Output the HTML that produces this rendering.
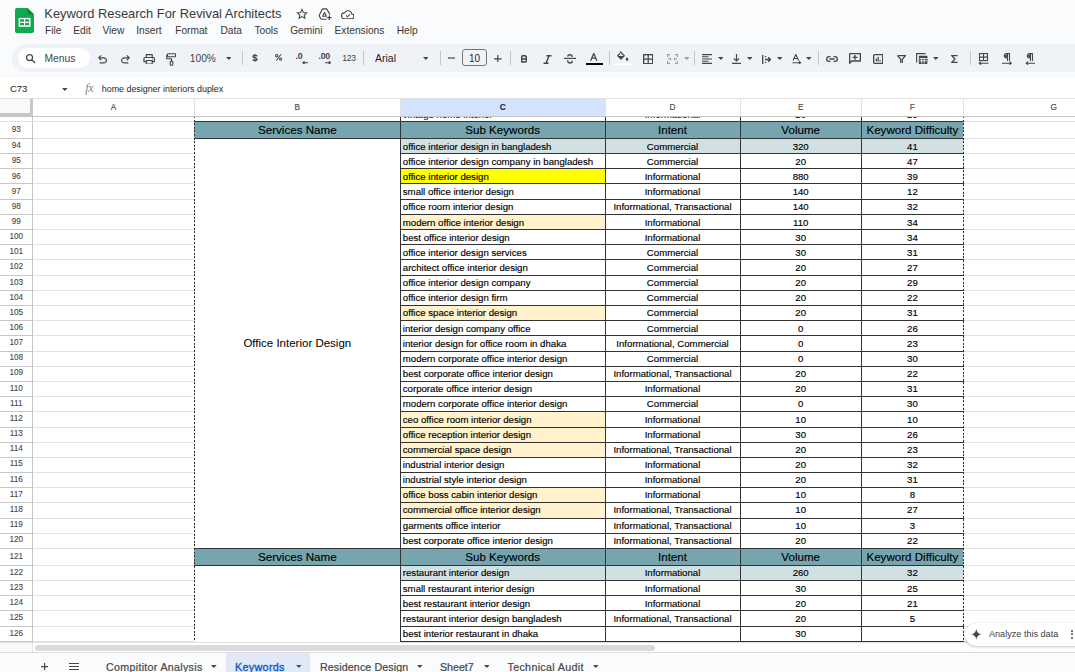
<!DOCTYPE html>
<html><head><meta charset="utf-8"><style>
html,body{margin:0;padding:0;width:1075px;height:672px;overflow:hidden;background:#f9fbfd;font-family:"Liberation Sans",sans-serif;}
.a{position:absolute;}
.t{color:#000;-webkit-text-stroke:0.15px #000;}
.menu{top:24px;font-size:10.2px;line-height:13px;color:#383838;white-space:nowrap}
.tb{top:52px;line-height:13px;color:#444746;white-space:nowrap}
.dd{top:57.5px;width:0;height:0;border-left:2.8px solid transparent;border-right:2.8px solid transparent;border-top:2.8px solid #444746}
.sep{top:51.2px;width:1px;height:14px;background:#c7c7c7}
.tab{top:659.8px;line-height:14px;color:#444746;white-space:nowrap;-webkit-text-stroke:0.2px #444746}
</style></head><body>
<!-- title bar -->
<svg class="a" style="left:15px;top:8px" width="19" height="25" viewBox="0 0 19 25">
  <path d="M2 0H12.5L19 6.4V23a2 2 0 0 1-2 2H2a2 2 0 0 1-2-2V2a2 2 0 0 1 2-2z" fill="#11a850"/>
  <path d="M12.5 0L19 6.4H14.5a2 2 0 0 1-2-2z" fill="#0a8a3a"/>
  <rect x="3.6" y="9.9" width="11.9" height="8.9" fill="#fff"/>
  <rect x="5" y="11.3" width="4" height="2.4" fill="#11a850"/>
  <rect x="10.1" y="11.3" width="4" height="2.4" fill="#11a850"/>
  <rect x="5" y="14.9" width="4" height="2.4" fill="#11a850"/>
  <rect x="10.1" y="14.9" width="4" height="2.4" fill="#11a850"/>
</svg>
<div class="a" style="left:44.3px;top:4.9px;font-size:12.9px;line-height:17px;color:#3a3a3a;white-space:nowrap">Keyword Research For Revival Architects</div>
<!-- star -->
<svg class="a" style="left:295.8px;top:7.6px" width="12" height="12" viewBox="0 0 24 24"><path d="M12 2.8l2.75 6.1 6.65.7-4.97 4.47 1.4 6.53L12 17.25 6.17 20.6l1.4-6.53L2.6 9.6l6.65-.7z" fill="none" stroke="#444746" stroke-width="2.1" stroke-linejoin="miter"/></svg>
<!-- drive add -->
<svg class="a" style="left:318px;top:8px" width="15" height="13" viewBox="0 0 15 13">
 <path d="M11.8 6.6L9.2 1.6Q8.8 0.9 8 0.9H5.3Q4.5 0.9 4.1 1.6L1.4 6.9Q1.1 7.5 1.4 8.1L2.6 10.4Q3 11.2 3.8 11.2H8.6" fill="none" stroke="#444746" stroke-width="1.15" stroke-linejoin="round"/>
 <path d="M6.5 4.6L4.7 8.2H8.4z" fill="none" stroke="#444746" stroke-width="1.15" stroke-linejoin="round"/>
 <path d="M11.3 7.5V11.9M9.1 9.7H13.5" stroke="#444746" stroke-width="1.25"/>
</svg>
<!-- cloud -->
<svg class="a" style="left:340.9px;top:9.6px" width="13.4" height="9.4" viewBox="0 0 28 19.6">
 <path d="M7 18.3h15a5 5 0 0 0 .6-9.97A8 8 0 0 0 7.5 6 6.1 6.1 0 0 0 7 18.3z" fill="none" stroke="#444746" stroke-width="2.3"/>
 <path d="M10.5 11.3l3 3 5.5-5.5" fill="none" stroke="#444746" stroke-width="2.2"/>
</svg>
<!-- menu -->
<div class="a menu" style="left:45px">File</div>
<div class="a menu" style="left:73.2px">Edit</div>
<div class="a menu" style="left:102.4px">View</div>
<div class="a menu" style="left:136.2px">Insert</div>
<div class="a menu" style="left:175.2px">Format</div>
<div class="a menu" style="left:220.4px">Data</div>
<div class="a menu" style="left:254.4px">Tools</div>
<div class="a menu" style="left:290.2px">Gemini</div>
<div class="a menu" style="left:334.5px">Extensions</div>
<div class="a menu" style="left:396.7px">Help</div>

<!-- toolbar band -->
<div class="a" style="left:12px;top:43.7px;width:1100px;height:28.8px;border-radius:14.4px;background:#eff2f7"></div>
<div class="a" style="left:18px;top:48px;width:72px;height:20px;border-radius:10px;background:#fff"></div>
<svg class="a" style="left:25px;top:52.5px" width="11.5" height="11.5" viewBox="0 0 24 24"><circle cx="9.5" cy="9.5" r="6.3" fill="none" stroke="#444746" stroke-width="2.5"/><path d="M14.2 14.2L21 21" stroke="#444746" stroke-width="2.8"/></svg>
<div class="a tb" style="left:44.4px;font-size:10.3px;color:#444746">Menus</div>
<!-- undo/redo -->
<svg class="a" style="left:98.3px;top:55.3px" width="9" height="8.5" viewBox="4 4 16 15"><path d="M7 19v-2h7.1q1.575 0 2.738-1T18 13.5q0-1.5-1.162-2.5T14.1 10H7.8l2.6 2.6L9 14 4 9l5-5 1.4 1.4L7.8 8h6.3q2.425 0 4.163 1.575T20 13.5q0 2.35-1.737 3.925T14.1 19Z" fill="#444746"/></svg>
<svg class="a" style="left:120.9px;top:55.3px" width="9" height="8.5" viewBox="4 4 16 15"><path d="M9.9 19q-2.425 0-4.163-1.575T4 13.5q0-2.35 1.737-3.925T9.9 8h6.3l-2.6-2.6L15 4l5 5-5 5-1.4-1.4 2.6-2.6H9.9q-1.575 0-2.738 1T6 13.5q0 1.5 1.162 2.5T9.9 17H17v2Z" fill="#444746"/></svg>
<!-- print -->
<svg class="a" style="left:142.5px;top:53.5px" width="12.5" height="10.6" viewBox="2 3 20 18"><path d="M16 8V5H8v3H6V3h12v5ZM18 12.5q.425 0 .713-.288Q19 11.925 19 11.5t-.287-.713Q18.425 10.5 18 10.5t-.712.287Q17 11.075 17 11.5t.288.712q.287.288.712.288ZM16 19v-4H8v4Zm2 2H6v-4H2v-6q0-1.275.875-2.137Q3.75 8 5 8h14q1.275 0 2.138.863Q22 9.725 22 11v6h-4Zm2-6v-4q0-.425-.288-.713Q19.425 10 19 10H5q-.425 0-.713.287Q4 10.575 4 11v4h2v-2h12v2Z" fill="#444746"/></svg>
<!-- paint format -->
<svg class="a" style="left:165.5px;top:53px" width="11" height="13" viewBox="0 0 22 26"><rect x="3" y="1.5" width="16" height="6" rx="1" fill="none" stroke="#444746" stroke-width="2.2"/><path d="M3 4.5H1.5v7H11v5" fill="none" stroke="#444746" stroke-width="2.2"/><rect x="8.5" y="16.5" width="5" height="8" rx="1" fill="none" stroke="#444746" stroke-width="2.2"/></svg>
<div class="a tb" style="left:189.8px;font-size:10.2px">100%</div>
<svg class="a" style="left:225.5px;top:57.3px" width="5.6" height="3" viewBox="0 0 6 3.2"><path d="M0 0H6L3 3.2z" fill="#444746"/></svg>
<div class="a sep" style="left:241.8px"></div>
<svg class="a" style="left:252.4px;top:54px" width="6" height="7.6" viewBox="0 0 6 7.6"><path d="M5.1 2.3Q4.9 1.1 3 1.1 1 1.1 1 2.5 1 3.5 3 3.8 5.1 4.1 5.1 5.3 5.1 6.5 3 6.5 1.1 6.5 0.9 5.3" fill="none" stroke="#444746" stroke-width="1.35"/><path d="M3 0V7.6" stroke="#444746" stroke-width="1"/></svg>
<svg class="a" style="left:274.8px;top:54.4px" width="7.4" height="6.8" viewBox="0 0 7.4 6.8"><circle cx="1.7" cy="1.7" r="1.15" fill="none" stroke="#444746" stroke-width="1.05"/><circle cx="5.7" cy="5.1" r="1.15" fill="none" stroke="#444746" stroke-width="1.05"/><path d="M6 0.3L1.4 6.5" stroke="#444746" stroke-width="1.05"/></svg>
<div class="a tb" style="left:295.6px;font-size:8.8px;font-weight:bold;letter-spacing:-0.4px;top:50.3px">.0</div>
<svg class="a" style="left:301.6px;top:60.7px" width="6.4" height="3.6" viewBox="0 0 6.4 3.6"><path d="M6.4 1.8H1M2.6 0.3L0.9 1.8 2.6 3.3" fill="none" stroke="#444746" stroke-width="1.15"/></svg>
<div class="a tb" style="left:318.6px;font-size:8.8px;font-weight:bold;letter-spacing:-0.4px;top:50.3px">.00</div>
<svg class="a" style="left:324.6px;top:60.5px" width="6.4" height="3.6" viewBox="0 0 6.4 3.6"><path d="M0 1.8H5.4M3.8 0.3L5.5 1.8 3.8 3.3" fill="none" stroke="#444746" stroke-width="1.15"/></svg>
<div class="a tb" style="left:342.2px;font-size:8.6px;letter-spacing:-0.2px">123</div>
<div class="a sep" style="left:363.4px"></div>
<div class="a tb" style="left:375px;font-size:10.5px;color:#1f1f1f">Arial</div>
<svg class="a" style="left:422.5px;top:57.3px" width="5.6" height="3" viewBox="0 0 6 3.2"><path d="M0 0H6L3 3.2z" fill="#444746"/></svg>
<div class="a sep" style="left:440.2px"></div>
<svg class="a" style="left:448px;top:57px" width="7.4" height="2" viewBox="0 0 7.4 2"><path d="M0 1H7.4" stroke="#444746" stroke-width="1.2"/></svg>
<div class="a" style="left:462.2px;top:49.3px;width:22.7px;height:15.2px;border:1px solid #747775;border-radius:3px"></div>
<div class="a tb" style="left:462.2px;width:24.7px;text-align:center;font-size:10px;color:#1f1f1f">10</div>
<svg class="a" style="left:494px;top:54.5px" width="7.6" height="7.6" viewBox="0 0 7.6 7.6"><path d="M0 3.8H7.6M3.8 0V7.6" stroke="#444746" stroke-width="1.2"/></svg>
<div class="a sep" style="left:509.5px"></div>
<svg class="a" style="left:520.8px;top:55px" width="6.4" height="7.8" viewBox="0 0 6.4 7.8"><path d="M0.8 0.75H3.4Q5.4 0.75 5.4 2.4 5.4 3.9 3.4 3.9H0.8M0.8 3.9H3.7Q5.7 3.9 5.7 5.5 5.7 7.05 3.7 7.05H0.8V0.75" fill="none" stroke="#444746" stroke-width="1.5"/></svg>
<svg class="a" style="left:542.5px;top:54.5px" width="9" height="9" viewBox="0 0 9 9"><path d="M3.5 0.8H8.5M0.5 8.2H5.5M6 0.8L3 8.2" fill="none" stroke="#444746" stroke-width="1.4"/></svg>
<svg class="a" style="left:564px;top:54px" width="12" height="10" viewBox="0 0 12 10"><path d="M0 4.4H12" stroke="#444746" stroke-width="1.2"/><path d="M8.3 2.8Q8 0.8 6 0.8 3.8 0.8 3.8 2.6M3.5 6.2Q3.8 9 6 9 8.3 9 8.3 6.8" fill="none" stroke="#444746" stroke-width="1.4"/></svg>
<svg class="a" style="left:590.2px;top:53px" width="7.5" height="8" viewBox="0 0 7.5 8"><path d="M0.6 7.8L3.75 0.4 6.9 7.8M1.8 5.2H5.7" fill="none" stroke="#444746" stroke-width="1.25"/></svg>
<div class="a" style="left:586px;top:62.6px;width:16.5px;height:2.8px;background:#000"></div>
<div class="a sep" style="left:608.5px"></div>
<svg class="a" style="left:617px;top:50.5px" width="12" height="10" viewBox="0 0 24 20"><path d="M6 1l8.5 8.5-6.5 6.5-6.5-6.5 4.5-4.5" fill="none" stroke="#444746" stroke-width="2.4" stroke-linejoin="round"/><path d="M2.5 10h11.5l-6 6z" fill="#444746"/><path d="M20 12q-2.5 3.5-2.5 5a2.5 2.5 0 0 0 5 0q0-1.5-2.5-5z" fill="#444746"/></svg>
<div class="a" style="left:615px;top:62.6px;width:17px;height:2.7px;background:#fff"></div>
<svg class="a" style="left:642.8px;top:53.8px" width="10.4" height="10.4" viewBox="0 0 10 10"><rect x="0.65" y="0.65" width="8.7" height="8.7" fill="none" stroke="#444746" stroke-width="1.3"/><path d="M5 0.5V9.5M0.5 5H9.5" stroke="#444746" stroke-width="1.2"/></svg>
<svg class="a" style="left:666.5px;top:54px" width="11" height="10" viewBox="0 0 11 10"><path d="M0.6 3V0.6H3M8 0.6H10.4V3M0.6 7V9.4H3M8 9.4H10.4V7" fill="none" stroke="#9aa0a6" stroke-width="1.1"/><path d="M1 5H4M2.8 3.8L4.2 5 2.8 6.2M10 5H7M8.2 3.8L6.8 5 8.2 6.2" fill="none" stroke="#9aa0a6" stroke-width="1"/></svg>
<svg class="a" style="left:684px;top:57.3px" width="5.6" height="3" viewBox="0 0 6 3.2"><path d="M0 0H6L3 3.2z" fill="#9aa0a6"/></svg>
<div class="a sep" style="left:694.2px"></div>
<svg class="a" style="left:702px;top:53.9px" width="10.2" height="10" viewBox="0 0 10.2 10"><path d="M0 0.6H10.2M0 2.8H6.5M0 5H10.2M0 7.2H6.5M0 9.4H10.2" stroke="#444746" stroke-width="1.1"/></svg>
<svg class="a" style="left:717.5px;top:57.3px" width="5.6" height="3" viewBox="0 0 6 3.2"><path d="M0 0H6L3 3.2z" fill="#444746"/></svg>
<svg class="a" style="left:732px;top:54px" width="9" height="10" viewBox="0 0 9 10"><path d="M0 9.4H9M4.5 0V7M1.8 4.3L4.5 7 7.2 4.3" fill="none" stroke="#444746" stroke-width="1.2"/></svg>
<svg class="a" style="left:746.8px;top:57.3px" width="5.6" height="3" viewBox="0 0 6 3.2"><path d="M0 0H6L3 3.2z" fill="#444746"/></svg>
<svg class="a" style="left:761.5px;top:54.5px" width="9" height="9" viewBox="0 0 9 9"><path d="M0.7 0V9M3 4.5H8.5M6.2 2.2L8.5 4.5 6.2 6.8M3.5 1V2.3M3.5 6.7V8" fill="none" stroke="#444746" stroke-width="1.3"/></svg>
<svg class="a" style="left:776.5px;top:57.3px" width="5.6" height="3" viewBox="0 0 6 3.2"><path d="M0 0H6L3 3.2z" fill="#444746"/></svg>
<svg class="a" style="left:791.5px;top:54px" width="10" height="10" viewBox="0 0 10 10"><path d="M1 6.5L3.8 0.5 6.6 6.5M2 4.5H5.6M0.5 8.7H8.5M7 7.2L8.6 8.7 7 10" fill="none" stroke="#444746" stroke-width="1.1"/></svg>
<svg class="a" style="left:806px;top:57.3px" width="5.6" height="3" viewBox="0 0 6 3.2"><path d="M0 0H6L3 3.2z" fill="#444746"/></svg>
<div class="a sep" style="left:817.5px"></div>
<svg class="a" style="left:826px;top:56px" width="12" height="6" viewBox="0 0 12 6"><path d="M4.5 0.7H3a2.3 2.3 0 0 0 0 4.6h1.5M7.5 0.7H9a2.3 2.3 0 0 1 0 4.6H7.5M3.5 3H8.5" fill="none" stroke="#444746" stroke-width="1.3"/></svg>
<svg class="a" style="left:849px;top:53.2px" width="12" height="11" viewBox="0 0 12 11"><path d="M0.65 10.3V0.65H11.35V8H2.6z" fill="none" stroke="#444746" stroke-width="1.3" stroke-linejoin="round"/><path d="M6 1.9V6.7M3.6 4.3H8.4" stroke="#444746" stroke-width="1.35"/></svg>
<svg class="a" style="left:873px;top:54px" width="10.4" height="10" viewBox="0 0 10.4 10"><rect x="0.65" y="0.65" width="9.1" height="8.7" rx="0.8" fill="none" stroke="#444746" stroke-width="1.3"/><path d="M3.3 4.5V7.6M5.2 2.8V7.6M7.1 6V7.6" stroke="#444746" stroke-width="1.25"/></svg>
<svg class="a" style="left:897px;top:55px" width="9" height="8.4" viewBox="0 0 9 8.4"><path d="M0.5 0.6H8.5L5.3 4.3V8.4M3.7 8.4V4.3L0.5 0.6" fill="none" stroke="#444746" stroke-width="1.2"/></svg>
<svg class="a" style="left:916.3px;top:53.2px" width="12" height="11.5" viewBox="0 0 12 11.5"><path d="M0.6 9.5V0.6H9.5" fill="none" stroke="#444746" stroke-width="1.1"/><rect x="2.8" y="2.8" width="8.6" height="8.1" rx="0.6" fill="#444746"/><path d="M3.5 5.5H10.8M3.5 7.8H10.8M5.7 5.5V10.5M8.2 5.5V10.5" stroke="#eff2f7" stroke-width="0.9"/></svg>
<svg class="a" style="left:933.3px;top:57.3px" width="5.6" height="3" viewBox="0 0 6 3.2"><path d="M0 0H6L3 3.2z" fill="#444746"/></svg>
<svg class="a" style="left:951.4px;top:55px" width="6.8" height="8.2" viewBox="0 0 6.8 8.2"><path d="M6.6 0.7H0.8L3.9 4.1 0.8 7.5H6.6" fill="none" stroke="#444746" stroke-width="1.35"/></svg>
<div class="a sep" style="left:969.7px"></div>
<svg class="a" style="left:978.4px;top:53.2px" width="10.5" height="11.5" viewBox="0 0 10.5 11.5"><rect x="1.5" y="0.6" width="8" height="7" fill="none" stroke="#444746" stroke-width="1.1"/><path d="M5.5 0.6V7.6M1.5 4.1H9.5M10.5 10.2H1.5M3 8.7L1.2 10.2 3 11.7" fill="none" stroke="#444746" stroke-width="1.1"/></svg>
<svg class="a" style="left:1001.5px;top:53.2px" width="10.5" height="11.5" viewBox="0 0 10.5 11.5"><path d="M5.5 0.6V8M7.5 0.6V8M7.8 0.6H4.5a2.2 2.2 0 0 0 0 4.4H5.5" fill="none" stroke="#444746" stroke-width="1.1"/><path d="M4.5 1.5a1.5 1.5 0 0 0 0 3h1V1.5z" fill="#444746"/><path d="M0 10.2H9M7.5 8.7L9.3 10.2 7.5 11.7" fill="none" stroke="#444746" stroke-width="1.1"/></svg>
<svg class="a" style="left:1024.8px;top:53.2px" width="10.5" height="11.5" viewBox="0 0 10.5 11.5"><path d="M5.5 0.6V8M7.5 0.6V8M7.8 0.6H4.5a2.2 2.2 0 0 0 0 4.4H5.5" fill="none" stroke="#444746" stroke-width="1.1"/><path d="M4.5 1.5a1.5 1.5 0 0 0 0 3h1V1.5z" fill="#444746"/><path d="M10.5 10.2H1.5M3 8.7L1.2 10.2 3 11.7" fill="none" stroke="#444746" stroke-width="1.1"/></svg>

<!-- formula bar -->
<div class="a" style="left:0;top:77.5px;width:1075px;height:22px;background:#fff"></div>
<div class="a" style="left:10px;top:81.8px;font-size:9.6px;line-height:14px;color:#1f1f1f;letter-spacing:-0.15px">C73</div>
<svg class="a" style="left:62.2px;top:87.8px" width="5.6" height="3" viewBox="0 0 6 3.2"><path d="M0 0H6L3 3.2z" fill="#444746"/></svg>
<div class="a" style="left:85.2px;top:80.8px;font-family:'Liberation Serif',serif;font-style:italic;font-size:12px;line-height:14px;color:#80868b;letter-spacing:-0.3px">fx</div>
<div class="a" style="left:101.8px;top:82px;font-size:8.9px;line-height:14px;color:#1f1f1f;white-space:nowrap">home designer interiors duplex</div>

<div class="a" style="left:0;top:0;width:1075px;height:642px;overflow:hidden">
<div class="a" style="left:0;top:99px;width:1075px;height:544px;background:#fff"></div>
<div class="a" style="left:32.5px;top:138px;width:1100px;height:1px;background:#e1e1e1"></div>
<div class="a" style="left:0;top:138px;width:32.5px;height:1px;background:#c7c7c7"></div>
<div class="a" style="left:32.5px;top:153px;width:1100px;height:1px;background:#e1e1e1"></div>
<div class="a" style="left:0;top:153px;width:32.5px;height:1px;background:#c7c7c7"></div>
<div class="a" style="left:32.5px;top:168px;width:1100px;height:1px;background:#e1e1e1"></div>
<div class="a" style="left:0;top:168px;width:32.5px;height:1px;background:#c7c7c7"></div>
<div class="a" style="left:32.5px;top:183px;width:1100px;height:1px;background:#e1e1e1"></div>
<div class="a" style="left:0;top:183px;width:32.5px;height:1px;background:#c7c7c7"></div>
<div class="a" style="left:32.5px;top:199px;width:1100px;height:1px;background:#e1e1e1"></div>
<div class="a" style="left:0;top:199px;width:32.5px;height:1px;background:#c7c7c7"></div>
<div class="a" style="left:32.5px;top:214px;width:1100px;height:1px;background:#e1e1e1"></div>
<div class="a" style="left:0;top:214px;width:32.5px;height:1px;background:#c7c7c7"></div>
<div class="a" style="left:32.5px;top:229px;width:1100px;height:1px;background:#e1e1e1"></div>
<div class="a" style="left:0;top:229px;width:32.5px;height:1px;background:#c7c7c7"></div>
<div class="a" style="left:32.5px;top:244px;width:1100px;height:1px;background:#e1e1e1"></div>
<div class="a" style="left:0;top:244px;width:32.5px;height:1px;background:#c7c7c7"></div>
<div class="a" style="left:32.5px;top:259px;width:1100px;height:1px;background:#e1e1e1"></div>
<div class="a" style="left:0;top:259px;width:32.5px;height:1px;background:#c7c7c7"></div>
<div class="a" style="left:32.5px;top:275px;width:1100px;height:1px;background:#e1e1e1"></div>
<div class="a" style="left:0;top:275px;width:32.5px;height:1px;background:#c7c7c7"></div>
<div class="a" style="left:32.5px;top:290px;width:1100px;height:1px;background:#e1e1e1"></div>
<div class="a" style="left:0;top:290px;width:32.5px;height:1px;background:#c7c7c7"></div>
<div class="a" style="left:32.5px;top:305px;width:1100px;height:1px;background:#e1e1e1"></div>
<div class="a" style="left:0;top:305px;width:32.5px;height:1px;background:#c7c7c7"></div>
<div class="a" style="left:32.5px;top:320px;width:1100px;height:1px;background:#e1e1e1"></div>
<div class="a" style="left:0;top:320px;width:32.5px;height:1px;background:#c7c7c7"></div>
<div class="a" style="left:32.5px;top:335px;width:1100px;height:1px;background:#e1e1e1"></div>
<div class="a" style="left:0;top:335px;width:32.5px;height:1px;background:#c7c7c7"></div>
<div class="a" style="left:32.5px;top:351px;width:1100px;height:1px;background:#e1e1e1"></div>
<div class="a" style="left:0;top:351px;width:32.5px;height:1px;background:#c7c7c7"></div>
<div class="a" style="left:32.5px;top:366px;width:1100px;height:1px;background:#e1e1e1"></div>
<div class="a" style="left:0;top:366px;width:32.5px;height:1px;background:#c7c7c7"></div>
<div class="a" style="left:32.5px;top:381px;width:1100px;height:1px;background:#e1e1e1"></div>
<div class="a" style="left:0;top:381px;width:32.5px;height:1px;background:#c7c7c7"></div>
<div class="a" style="left:32.5px;top:396px;width:1100px;height:1px;background:#e1e1e1"></div>
<div class="a" style="left:0;top:396px;width:32.5px;height:1px;background:#c7c7c7"></div>
<div class="a" style="left:32.5px;top:411px;width:1100px;height:1px;background:#e1e1e1"></div>
<div class="a" style="left:0;top:411px;width:32.5px;height:1px;background:#c7c7c7"></div>
<div class="a" style="left:32.5px;top:427px;width:1100px;height:1px;background:#e1e1e1"></div>
<div class="a" style="left:0;top:427px;width:32.5px;height:1px;background:#c7c7c7"></div>
<div class="a" style="left:32.5px;top:442px;width:1100px;height:1px;background:#e1e1e1"></div>
<div class="a" style="left:0;top:442px;width:32.5px;height:1px;background:#c7c7c7"></div>
<div class="a" style="left:32.5px;top:457px;width:1100px;height:1px;background:#e1e1e1"></div>
<div class="a" style="left:0;top:457px;width:32.5px;height:1px;background:#c7c7c7"></div>
<div class="a" style="left:32.5px;top:472px;width:1100px;height:1px;background:#e1e1e1"></div>
<div class="a" style="left:0;top:472px;width:32.5px;height:1px;background:#c7c7c7"></div>
<div class="a" style="left:32.5px;top:487px;width:1100px;height:1px;background:#e1e1e1"></div>
<div class="a" style="left:0;top:487px;width:32.5px;height:1px;background:#c7c7c7"></div>
<div class="a" style="left:32.5px;top:502px;width:1100px;height:1px;background:#e1e1e1"></div>
<div class="a" style="left:0;top:502px;width:32.5px;height:1px;background:#c7c7c7"></div>
<div class="a" style="left:32.5px;top:518px;width:1100px;height:1px;background:#e1e1e1"></div>
<div class="a" style="left:0;top:518px;width:32.5px;height:1px;background:#c7c7c7"></div>
<div class="a" style="left:32.5px;top:533px;width:1100px;height:1px;background:#e1e1e1"></div>
<div class="a" style="left:0;top:533px;width:32.5px;height:1px;background:#c7c7c7"></div>
<div class="a" style="left:32.5px;top:548px;width:1100px;height:1px;background:#e1e1e1"></div>
<div class="a" style="left:0;top:548px;width:32.5px;height:1px;background:#c7c7c7"></div>
<div class="a" style="left:32.5px;top:565px;width:1100px;height:1px;background:#e1e1e1"></div>
<div class="a" style="left:0;top:565px;width:32.5px;height:1px;background:#c7c7c7"></div>
<div class="a" style="left:32.5px;top:580px;width:1100px;height:1px;background:#e1e1e1"></div>
<div class="a" style="left:0;top:580px;width:32.5px;height:1px;background:#c7c7c7"></div>
<div class="a" style="left:32.5px;top:595px;width:1100px;height:1px;background:#e1e1e1"></div>
<div class="a" style="left:0;top:595px;width:32.5px;height:1px;background:#c7c7c7"></div>
<div class="a" style="left:32.5px;top:610px;width:1100px;height:1px;background:#e1e1e1"></div>
<div class="a" style="left:0;top:610px;width:32.5px;height:1px;background:#c7c7c7"></div>
<div class="a" style="left:32.5px;top:626px;width:1100px;height:1px;background:#e1e1e1"></div>
<div class="a" style="left:0;top:626px;width:32.5px;height:1px;background:#c7c7c7"></div>
<div class="a" style="left:32.5px;top:641px;width:1100px;height:1px;background:#e1e1e1"></div>
<div class="a" style="left:0;top:641px;width:32.5px;height:1px;background:#c7c7c7"></div>
<div class="a" style="left:32.5px;top:656px;width:1100px;height:1px;background:#e1e1e1"></div>
<div class="a" style="left:0;top:656px;width:32.5px;height:1px;background:#c7c7c7"></div>
<div class="a" style="left:0;top:121px;width:1100px;height:1px;background:#e1e1e1"></div>
<div class="a" style="left:194px;top:116px;width:1px;height:530px;background:#e1e1e1"></div>
<div class="a" style="left:400px;top:116px;width:1px;height:530px;background:#e1e1e1"></div>
<div class="a" style="left:605px;top:116px;width:1px;height:530px;background:#e1e1e1"></div>
<div class="a" style="left:740px;top:116px;width:1px;height:530px;background:#e1e1e1"></div>
<div class="a" style="left:861px;top:116px;width:1px;height:530px;background:#e1e1e1"></div>
<div class="a" style="left:963px;top:116px;width:1px;height:530px;background:#e1e1e1"></div>
<div class="a" style="left:1144px;top:116px;width:1px;height:530px;background:#e1e1e1"></div>
<div class="a" style="left:32px;top:99px;width:1px;height:550px;background:#c7c7c7"></div>
<div class="a" style="left:195px;top:139px;width:205px;height:409px;background:#fff"></div>
<div class="a" style="left:195px;top:566px;width:205px;height:100px;background:#fff"></div>
<div class="a" style="left:194px;top:121px;width:769px;height:17px;background:#76a5af"></div>
<div class="a" style="left:400px;top:138px;width:563px;height:15px;background:#d0e0e3"></div>
<div class="a" style="left:400px;top:168px;width:205px;height:15px;background:#ffff00"></div>
<div class="a" style="left:400px;top:214px;width:205px;height:15px;background:#fff2cc"></div>
<div class="a" style="left:400px;top:305px;width:205px;height:15px;background:#fff2cc"></div>
<div class="a" style="left:400px;top:411px;width:205px;height:16px;background:#fff2cc"></div>
<div class="a" style="left:400px;top:427px;width:205px;height:15px;background:#fff2cc"></div>
<div class="a" style="left:400px;top:442px;width:205px;height:15px;background:#fff2cc"></div>
<div class="a" style="left:400px;top:487px;width:205px;height:15px;background:#fff2cc"></div>
<div class="a" style="left:400px;top:502px;width:205px;height:16px;background:#fff2cc"></div>
<div class="a" style="left:194px;top:548px;width:769px;height:17px;background:#76a5af"></div>
<div class="a" style="left:400px;top:565px;width:563px;height:15px;background:#d0e0e3"></div>
<div class="a" style="left:194px;top:121px;width:770px;height:1px;background:#333"></div>
<div class="a" style="left:194px;top:138px;width:770px;height:1px;background:#333"></div>
<div class="a" style="left:400px;top:121px;width:1px;height:17px;background:#333"></div>
<div class="a" style="left:605px;top:121px;width:1px;height:17px;background:#333"></div>
<div class="a" style="left:740px;top:121px;width:1px;height:17px;background:#333"></div>
<div class="a" style="left:861px;top:121px;width:1px;height:17px;background:#333"></div>
<div class="a" style="left:400px;top:153px;width:564px;height:1px;background:#333"></div>
<div class="a" style="left:400px;top:138px;width:1px;height:16px;background:#333"></div>
<div class="a" style="left:605px;top:138px;width:1px;height:16px;background:#333"></div>
<div class="a" style="left:740px;top:138px;width:1px;height:16px;background:#333"></div>
<div class="a" style="left:861px;top:138px;width:1px;height:16px;background:#333"></div>
<div class="a" style="left:400px;top:168px;width:564px;height:1px;background:#333"></div>
<div class="a" style="left:400px;top:153px;width:1px;height:16px;background:#333"></div>
<div class="a" style="left:605px;top:153px;width:1px;height:16px;background:#333"></div>
<div class="a" style="left:740px;top:153px;width:1px;height:16px;background:#333"></div>
<div class="a" style="left:861px;top:153px;width:1px;height:16px;background:#333"></div>
<div class="a" style="left:400px;top:183px;width:564px;height:1px;background:#333"></div>
<div class="a" style="left:400px;top:168px;width:1px;height:16px;background:#333"></div>
<div class="a" style="left:605px;top:168px;width:1px;height:16px;background:#333"></div>
<div class="a" style="left:740px;top:168px;width:1px;height:16px;background:#333"></div>
<div class="a" style="left:861px;top:168px;width:1px;height:16px;background:#333"></div>
<div class="a" style="left:400px;top:199px;width:564px;height:1px;background:#333"></div>
<div class="a" style="left:400px;top:183px;width:1px;height:17px;background:#333"></div>
<div class="a" style="left:605px;top:183px;width:1px;height:17px;background:#333"></div>
<div class="a" style="left:740px;top:183px;width:1px;height:17px;background:#333"></div>
<div class="a" style="left:861px;top:183px;width:1px;height:17px;background:#333"></div>
<div class="a" style="left:400px;top:214px;width:564px;height:1px;background:#333"></div>
<div class="a" style="left:400px;top:199px;width:1px;height:16px;background:#333"></div>
<div class="a" style="left:605px;top:199px;width:1px;height:16px;background:#333"></div>
<div class="a" style="left:740px;top:199px;width:1px;height:16px;background:#333"></div>
<div class="a" style="left:861px;top:199px;width:1px;height:16px;background:#333"></div>
<div class="a" style="left:400px;top:229px;width:564px;height:1px;background:#333"></div>
<div class="a" style="left:400px;top:214px;width:1px;height:16px;background:#333"></div>
<div class="a" style="left:605px;top:214px;width:1px;height:16px;background:#333"></div>
<div class="a" style="left:740px;top:214px;width:1px;height:16px;background:#333"></div>
<div class="a" style="left:861px;top:214px;width:1px;height:16px;background:#333"></div>
<div class="a" style="left:400px;top:244px;width:564px;height:1px;background:#333"></div>
<div class="a" style="left:400px;top:229px;width:1px;height:16px;background:#333"></div>
<div class="a" style="left:605px;top:229px;width:1px;height:16px;background:#333"></div>
<div class="a" style="left:740px;top:229px;width:1px;height:16px;background:#333"></div>
<div class="a" style="left:861px;top:229px;width:1px;height:16px;background:#333"></div>
<div class="a" style="left:400px;top:259px;width:564px;height:1px;background:#333"></div>
<div class="a" style="left:400px;top:244px;width:1px;height:16px;background:#333"></div>
<div class="a" style="left:605px;top:244px;width:1px;height:16px;background:#333"></div>
<div class="a" style="left:740px;top:244px;width:1px;height:16px;background:#333"></div>
<div class="a" style="left:861px;top:244px;width:1px;height:16px;background:#333"></div>
<div class="a" style="left:400px;top:275px;width:564px;height:1px;background:#333"></div>
<div class="a" style="left:400px;top:259px;width:1px;height:17px;background:#333"></div>
<div class="a" style="left:605px;top:259px;width:1px;height:17px;background:#333"></div>
<div class="a" style="left:740px;top:259px;width:1px;height:17px;background:#333"></div>
<div class="a" style="left:861px;top:259px;width:1px;height:17px;background:#333"></div>
<div class="a" style="left:400px;top:290px;width:564px;height:1px;background:#333"></div>
<div class="a" style="left:400px;top:275px;width:1px;height:16px;background:#333"></div>
<div class="a" style="left:605px;top:275px;width:1px;height:16px;background:#333"></div>
<div class="a" style="left:740px;top:275px;width:1px;height:16px;background:#333"></div>
<div class="a" style="left:861px;top:275px;width:1px;height:16px;background:#333"></div>
<div class="a" style="left:400px;top:305px;width:564px;height:1px;background:#333"></div>
<div class="a" style="left:400px;top:290px;width:1px;height:16px;background:#333"></div>
<div class="a" style="left:605px;top:290px;width:1px;height:16px;background:#333"></div>
<div class="a" style="left:740px;top:290px;width:1px;height:16px;background:#333"></div>
<div class="a" style="left:861px;top:290px;width:1px;height:16px;background:#333"></div>
<div class="a" style="left:400px;top:320px;width:564px;height:1px;background:#333"></div>
<div class="a" style="left:400px;top:305px;width:1px;height:16px;background:#333"></div>
<div class="a" style="left:605px;top:305px;width:1px;height:16px;background:#333"></div>
<div class="a" style="left:740px;top:305px;width:1px;height:16px;background:#333"></div>
<div class="a" style="left:861px;top:305px;width:1px;height:16px;background:#333"></div>
<div class="a" style="left:400px;top:335px;width:564px;height:1px;background:#333"></div>
<div class="a" style="left:400px;top:320px;width:1px;height:16px;background:#333"></div>
<div class="a" style="left:605px;top:320px;width:1px;height:16px;background:#333"></div>
<div class="a" style="left:740px;top:320px;width:1px;height:16px;background:#333"></div>
<div class="a" style="left:861px;top:320px;width:1px;height:16px;background:#333"></div>
<div class="a" style="left:400px;top:351px;width:564px;height:1px;background:#333"></div>
<div class="a" style="left:400px;top:335px;width:1px;height:17px;background:#333"></div>
<div class="a" style="left:605px;top:335px;width:1px;height:17px;background:#333"></div>
<div class="a" style="left:740px;top:335px;width:1px;height:17px;background:#333"></div>
<div class="a" style="left:861px;top:335px;width:1px;height:17px;background:#333"></div>
<div class="a" style="left:400px;top:366px;width:564px;height:1px;background:#333"></div>
<div class="a" style="left:400px;top:351px;width:1px;height:16px;background:#333"></div>
<div class="a" style="left:605px;top:351px;width:1px;height:16px;background:#333"></div>
<div class="a" style="left:740px;top:351px;width:1px;height:16px;background:#333"></div>
<div class="a" style="left:861px;top:351px;width:1px;height:16px;background:#333"></div>
<div class="a" style="left:400px;top:381px;width:564px;height:1px;background:#333"></div>
<div class="a" style="left:400px;top:366px;width:1px;height:16px;background:#333"></div>
<div class="a" style="left:605px;top:366px;width:1px;height:16px;background:#333"></div>
<div class="a" style="left:740px;top:366px;width:1px;height:16px;background:#333"></div>
<div class="a" style="left:861px;top:366px;width:1px;height:16px;background:#333"></div>
<div class="a" style="left:400px;top:396px;width:564px;height:1px;background:#333"></div>
<div class="a" style="left:400px;top:381px;width:1px;height:16px;background:#333"></div>
<div class="a" style="left:605px;top:381px;width:1px;height:16px;background:#333"></div>
<div class="a" style="left:740px;top:381px;width:1px;height:16px;background:#333"></div>
<div class="a" style="left:861px;top:381px;width:1px;height:16px;background:#333"></div>
<div class="a" style="left:400px;top:411px;width:564px;height:1px;background:#333"></div>
<div class="a" style="left:400px;top:396px;width:1px;height:16px;background:#333"></div>
<div class="a" style="left:605px;top:396px;width:1px;height:16px;background:#333"></div>
<div class="a" style="left:740px;top:396px;width:1px;height:16px;background:#333"></div>
<div class="a" style="left:861px;top:396px;width:1px;height:16px;background:#333"></div>
<div class="a" style="left:400px;top:427px;width:564px;height:1px;background:#333"></div>
<div class="a" style="left:400px;top:411px;width:1px;height:17px;background:#333"></div>
<div class="a" style="left:605px;top:411px;width:1px;height:17px;background:#333"></div>
<div class="a" style="left:740px;top:411px;width:1px;height:17px;background:#333"></div>
<div class="a" style="left:861px;top:411px;width:1px;height:17px;background:#333"></div>
<div class="a" style="left:400px;top:442px;width:564px;height:1px;background:#333"></div>
<div class="a" style="left:400px;top:427px;width:1px;height:16px;background:#333"></div>
<div class="a" style="left:605px;top:427px;width:1px;height:16px;background:#333"></div>
<div class="a" style="left:740px;top:427px;width:1px;height:16px;background:#333"></div>
<div class="a" style="left:861px;top:427px;width:1px;height:16px;background:#333"></div>
<div class="a" style="left:400px;top:457px;width:564px;height:1px;background:#333"></div>
<div class="a" style="left:400px;top:442px;width:1px;height:16px;background:#333"></div>
<div class="a" style="left:605px;top:442px;width:1px;height:16px;background:#333"></div>
<div class="a" style="left:740px;top:442px;width:1px;height:16px;background:#333"></div>
<div class="a" style="left:861px;top:442px;width:1px;height:16px;background:#333"></div>
<div class="a" style="left:400px;top:472px;width:564px;height:1px;background:#333"></div>
<div class="a" style="left:400px;top:457px;width:1px;height:16px;background:#333"></div>
<div class="a" style="left:605px;top:457px;width:1px;height:16px;background:#333"></div>
<div class="a" style="left:740px;top:457px;width:1px;height:16px;background:#333"></div>
<div class="a" style="left:861px;top:457px;width:1px;height:16px;background:#333"></div>
<div class="a" style="left:400px;top:487px;width:564px;height:1px;background:#333"></div>
<div class="a" style="left:400px;top:472px;width:1px;height:16px;background:#333"></div>
<div class="a" style="left:605px;top:472px;width:1px;height:16px;background:#333"></div>
<div class="a" style="left:740px;top:472px;width:1px;height:16px;background:#333"></div>
<div class="a" style="left:861px;top:472px;width:1px;height:16px;background:#333"></div>
<div class="a" style="left:400px;top:502px;width:564px;height:1px;background:#333"></div>
<div class="a" style="left:400px;top:487px;width:1px;height:16px;background:#333"></div>
<div class="a" style="left:605px;top:487px;width:1px;height:16px;background:#333"></div>
<div class="a" style="left:740px;top:487px;width:1px;height:16px;background:#333"></div>
<div class="a" style="left:861px;top:487px;width:1px;height:16px;background:#333"></div>
<div class="a" style="left:400px;top:518px;width:564px;height:1px;background:#333"></div>
<div class="a" style="left:400px;top:502px;width:1px;height:17px;background:#333"></div>
<div class="a" style="left:605px;top:502px;width:1px;height:17px;background:#333"></div>
<div class="a" style="left:740px;top:502px;width:1px;height:17px;background:#333"></div>
<div class="a" style="left:861px;top:502px;width:1px;height:17px;background:#333"></div>
<div class="a" style="left:400px;top:533px;width:564px;height:1px;background:#333"></div>
<div class="a" style="left:400px;top:518px;width:1px;height:16px;background:#333"></div>
<div class="a" style="left:605px;top:518px;width:1px;height:16px;background:#333"></div>
<div class="a" style="left:740px;top:518px;width:1px;height:16px;background:#333"></div>
<div class="a" style="left:861px;top:518px;width:1px;height:16px;background:#333"></div>
<div class="a" style="left:400px;top:548px;width:564px;height:1px;background:#333"></div>
<div class="a" style="left:400px;top:533px;width:1px;height:16px;background:#333"></div>
<div class="a" style="left:605px;top:533px;width:1px;height:16px;background:#333"></div>
<div class="a" style="left:740px;top:533px;width:1px;height:16px;background:#333"></div>
<div class="a" style="left:861px;top:533px;width:1px;height:16px;background:#333"></div>
<div class="a" style="left:194px;top:548px;width:770px;height:1px;background:#333"></div>
<div class="a" style="left:194px;top:565px;width:770px;height:1px;background:#333"></div>
<div class="a" style="left:400px;top:548px;width:1px;height:17px;background:#333"></div>
<div class="a" style="left:605px;top:548px;width:1px;height:17px;background:#333"></div>
<div class="a" style="left:740px;top:548px;width:1px;height:17px;background:#333"></div>
<div class="a" style="left:861px;top:548px;width:1px;height:17px;background:#333"></div>
<div class="a" style="left:400px;top:580px;width:564px;height:1px;background:#333"></div>
<div class="a" style="left:400px;top:565px;width:1px;height:16px;background:#333"></div>
<div class="a" style="left:605px;top:565px;width:1px;height:16px;background:#333"></div>
<div class="a" style="left:740px;top:565px;width:1px;height:16px;background:#333"></div>
<div class="a" style="left:861px;top:565px;width:1px;height:16px;background:#333"></div>
<div class="a" style="left:400px;top:595px;width:564px;height:1px;background:#333"></div>
<div class="a" style="left:400px;top:580px;width:1px;height:16px;background:#333"></div>
<div class="a" style="left:605px;top:580px;width:1px;height:16px;background:#333"></div>
<div class="a" style="left:740px;top:580px;width:1px;height:16px;background:#333"></div>
<div class="a" style="left:861px;top:580px;width:1px;height:16px;background:#333"></div>
<div class="a" style="left:400px;top:610px;width:564px;height:1px;background:#333"></div>
<div class="a" style="left:400px;top:595px;width:1px;height:16px;background:#333"></div>
<div class="a" style="left:605px;top:595px;width:1px;height:16px;background:#333"></div>
<div class="a" style="left:740px;top:595px;width:1px;height:16px;background:#333"></div>
<div class="a" style="left:861px;top:595px;width:1px;height:16px;background:#333"></div>
<div class="a" style="left:400px;top:626px;width:564px;height:1px;background:#333"></div>
<div class="a" style="left:400px;top:610px;width:1px;height:17px;background:#333"></div>
<div class="a" style="left:605px;top:610px;width:1px;height:17px;background:#333"></div>
<div class="a" style="left:740px;top:610px;width:1px;height:17px;background:#333"></div>
<div class="a" style="left:861px;top:610px;width:1px;height:17px;background:#333"></div>
<div class="a" style="left:400px;top:641px;width:564px;height:1px;background:#333"></div>
<div class="a" style="left:400px;top:626px;width:1px;height:16px;background:#333"></div>
<div class="a" style="left:605px;top:626px;width:1px;height:16px;background:#333"></div>
<div class="a" style="left:740px;top:626px;width:1px;height:16px;background:#333"></div>
<div class="a" style="left:861px;top:626px;width:1px;height:16px;background:#333"></div>
<div class="a" style="left:194px;top:116px;width:1px;height:530px;background:repeating-linear-gradient(to bottom,#333 0,#333 2px,transparent 2px,transparent 3.6px)"></div>
<div class="a" style="left:963px;top:116px;width:1px;height:530px;background:repeating-linear-gradient(to bottom,#333 0,#333 2px,transparent 2px,transparent 3.6px)"></div>
<div class="a" style="left:194.3px;top:138.4px;width:206px;height:410.13px;display:flex;align-items:center;justify-content:center;font-size:11.5px;color:#000">Office Interior Design</div>
<div class="a t" style="left:194.3px;top:121.25px;width:206px;height:17.15px;line-height:17.15px;text-align:center;font-size:11.6px;color:#000;white-space:nowrap;overflow:hidden">Services Name</div>
<div class="a t" style="left:400.3px;top:121.25px;width:204.7px;height:17.15px;line-height:17.15px;text-align:center;font-size:11.6px;color:#000;white-space:nowrap;overflow:hidden">Sub Keywords</div>
<div class="a t" style="left:605px;top:121.25px;width:135px;height:17.15px;line-height:17.15px;text-align:center;font-size:11.6px;color:#000;white-space:nowrap;overflow:hidden">Intent</div>
<div class="a t" style="left:740px;top:121.25px;width:121.4px;height:17.15px;line-height:17.15px;text-align:center;font-size:11.6px;color:#000;white-space:nowrap;overflow:hidden">Volume</div>
<div class="a t" style="left:861.4px;top:121.25px;width:102px;height:17.15px;line-height:17.15px;text-align:center;font-size:11.6px;color:#000;white-space:nowrap;overflow:hidden">Keyword Difficulty</div>
<div class="a t" style="left:402.8px;top:138.81px;width:201.7px;height:15.2px;line-height:15.2px;font-size:9.65px;white-space:nowrap;overflow:hidden;color:#000">office interior design in bangladesh</div>
<div class="a t" style="left:605px;top:138.81px;width:135px;height:15.2px;line-height:15.2px;text-align:center;font-size:9.65px;white-space:nowrap;color:#000">Commercial</div>
<div class="a t" style="left:740px;top:138.81px;width:121.4px;height:15.2px;line-height:15.2px;text-align:center;font-size:9.65px;white-space:nowrap;color:#000">320</div>
<div class="a t" style="left:861.4px;top:138.81px;width:102px;height:15.2px;line-height:15.2px;text-align:center;font-size:9.65px;white-space:nowrap;color:#000">41</div>
<div class="a t" style="left:402.8px;top:153.96px;width:201.7px;height:15.2px;line-height:15.2px;font-size:9.65px;white-space:nowrap;overflow:hidden;color:#000">office interior design company in bangladesh</div>
<div class="a t" style="left:605px;top:153.96px;width:135px;height:15.2px;line-height:15.2px;text-align:center;font-size:9.65px;white-space:nowrap;color:#000">Commercial</div>
<div class="a t" style="left:740px;top:153.96px;width:121.4px;height:15.2px;line-height:15.2px;text-align:center;font-size:9.65px;white-space:nowrap;color:#000">20</div>
<div class="a t" style="left:861.4px;top:153.96px;width:102px;height:15.2px;line-height:15.2px;text-align:center;font-size:9.65px;white-space:nowrap;color:#000">47</div>
<div class="a t" style="left:402.8px;top:169.11px;width:201.7px;height:15.2px;line-height:15.2px;font-size:9.65px;white-space:nowrap;overflow:hidden;color:#000">office interior design</div>
<div class="a t" style="left:605px;top:169.11px;width:135px;height:15.2px;line-height:15.2px;text-align:center;font-size:9.65px;white-space:nowrap;color:#000">Informational</div>
<div class="a t" style="left:740px;top:169.11px;width:121.4px;height:15.2px;line-height:15.2px;text-align:center;font-size:9.65px;white-space:nowrap;color:#000">880</div>
<div class="a t" style="left:861.4px;top:169.11px;width:102px;height:15.2px;line-height:15.2px;text-align:center;font-size:9.65px;white-space:nowrap;color:#000">39</div>
<div class="a t" style="left:402.8px;top:184.26px;width:201.7px;height:15.2px;line-height:15.2px;font-size:9.65px;white-space:nowrap;overflow:hidden;color:#000">small office interior design</div>
<div class="a t" style="left:605px;top:184.26px;width:135px;height:15.2px;line-height:15.2px;text-align:center;font-size:9.65px;white-space:nowrap;color:#000">Informational</div>
<div class="a t" style="left:740px;top:184.26px;width:121.4px;height:15.2px;line-height:15.2px;text-align:center;font-size:9.65px;white-space:nowrap;color:#000">140</div>
<div class="a t" style="left:861.4px;top:184.26px;width:102px;height:15.2px;line-height:15.2px;text-align:center;font-size:9.65px;white-space:nowrap;color:#000">12</div>
<div class="a t" style="left:402.8px;top:199.41px;width:201.7px;height:15.2px;line-height:15.2px;font-size:9.65px;white-space:nowrap;overflow:hidden;color:#000">office room interior design</div>
<div class="a t" style="left:605px;top:199.41px;width:135px;height:15.2px;line-height:15.2px;text-align:center;font-size:9.65px;white-space:nowrap;color:#000">Informational, Transactional</div>
<div class="a t" style="left:740px;top:199.41px;width:121.4px;height:15.2px;line-height:15.2px;text-align:center;font-size:9.65px;white-space:nowrap;color:#000">140</div>
<div class="a t" style="left:861.4px;top:199.41px;width:102px;height:15.2px;line-height:15.2px;text-align:center;font-size:9.65px;white-space:nowrap;color:#000">32</div>
<div class="a t" style="left:402.8px;top:214.56px;width:201.7px;height:15.2px;line-height:15.2px;font-size:9.65px;white-space:nowrap;overflow:hidden;color:#000">modern office interior design</div>
<div class="a t" style="left:605px;top:214.56px;width:135px;height:15.2px;line-height:15.2px;text-align:center;font-size:9.65px;white-space:nowrap;color:#000">Informational</div>
<div class="a t" style="left:740px;top:214.56px;width:121.4px;height:15.2px;line-height:15.2px;text-align:center;font-size:9.65px;white-space:nowrap;color:#000">110</div>
<div class="a t" style="left:861.4px;top:214.56px;width:102px;height:15.2px;line-height:15.2px;text-align:center;font-size:9.65px;white-space:nowrap;color:#000">34</div>
<div class="a t" style="left:402.8px;top:229.71px;width:201.7px;height:15.2px;line-height:15.2px;font-size:9.65px;white-space:nowrap;overflow:hidden;color:#000">best office interior design</div>
<div class="a t" style="left:605px;top:229.71px;width:135px;height:15.2px;line-height:15.2px;text-align:center;font-size:9.65px;white-space:nowrap;color:#000">Informational</div>
<div class="a t" style="left:740px;top:229.71px;width:121.4px;height:15.2px;line-height:15.2px;text-align:center;font-size:9.65px;white-space:nowrap;color:#000">30</div>
<div class="a t" style="left:861.4px;top:229.71px;width:102px;height:15.2px;line-height:15.2px;text-align:center;font-size:9.65px;white-space:nowrap;color:#000">34</div>
<div class="a t" style="left:402.8px;top:244.86px;width:201.7px;height:15.2px;line-height:15.2px;font-size:9.65px;white-space:nowrap;overflow:hidden;color:#000">office interior design services</div>
<div class="a t" style="left:605px;top:244.86px;width:135px;height:15.2px;line-height:15.2px;text-align:center;font-size:9.65px;white-space:nowrap;color:#000">Commercial</div>
<div class="a t" style="left:740px;top:244.86px;width:121.4px;height:15.2px;line-height:15.2px;text-align:center;font-size:9.65px;white-space:nowrap;color:#000">30</div>
<div class="a t" style="left:861.4px;top:244.86px;width:102px;height:15.2px;line-height:15.2px;text-align:center;font-size:9.65px;white-space:nowrap;color:#000">31</div>
<div class="a t" style="left:402.8px;top:260.01px;width:201.7px;height:15.2px;line-height:15.2px;font-size:9.65px;white-space:nowrap;overflow:hidden;color:#000">architect office interior design</div>
<div class="a t" style="left:605px;top:260.01px;width:135px;height:15.2px;line-height:15.2px;text-align:center;font-size:9.65px;white-space:nowrap;color:#000">Commercial</div>
<div class="a t" style="left:740px;top:260.01px;width:121.4px;height:15.2px;line-height:15.2px;text-align:center;font-size:9.65px;white-space:nowrap;color:#000">20</div>
<div class="a t" style="left:861.4px;top:260.01px;width:102px;height:15.2px;line-height:15.2px;text-align:center;font-size:9.65px;white-space:nowrap;color:#000">27</div>
<div class="a t" style="left:402.8px;top:275.16px;width:201.7px;height:15.2px;line-height:15.2px;font-size:9.65px;white-space:nowrap;overflow:hidden;color:#000">office interior design company</div>
<div class="a t" style="left:605px;top:275.16px;width:135px;height:15.2px;line-height:15.2px;text-align:center;font-size:9.65px;white-space:nowrap;color:#000">Commercial</div>
<div class="a t" style="left:740px;top:275.16px;width:121.4px;height:15.2px;line-height:15.2px;text-align:center;font-size:9.65px;white-space:nowrap;color:#000">20</div>
<div class="a t" style="left:861.4px;top:275.16px;width:102px;height:15.2px;line-height:15.2px;text-align:center;font-size:9.65px;white-space:nowrap;color:#000">29</div>
<div class="a t" style="left:402.8px;top:290.31px;width:201.7px;height:15.2px;line-height:15.2px;font-size:9.65px;white-space:nowrap;overflow:hidden;color:#000">office interior design firm</div>
<div class="a t" style="left:605px;top:290.31px;width:135px;height:15.2px;line-height:15.2px;text-align:center;font-size:9.65px;white-space:nowrap;color:#000">Commercial</div>
<div class="a t" style="left:740px;top:290.31px;width:121.4px;height:15.2px;line-height:15.2px;text-align:center;font-size:9.65px;white-space:nowrap;color:#000">20</div>
<div class="a t" style="left:861.4px;top:290.31px;width:102px;height:15.2px;line-height:15.2px;text-align:center;font-size:9.65px;white-space:nowrap;color:#000">22</div>
<div class="a t" style="left:402.8px;top:305.46px;width:201.7px;height:15.2px;line-height:15.2px;font-size:9.65px;white-space:nowrap;overflow:hidden;color:#000">office space interior design</div>
<div class="a t" style="left:605px;top:305.46px;width:135px;height:15.2px;line-height:15.2px;text-align:center;font-size:9.65px;white-space:nowrap;color:#000">Commercial</div>
<div class="a t" style="left:740px;top:305.46px;width:121.4px;height:15.2px;line-height:15.2px;text-align:center;font-size:9.65px;white-space:nowrap;color:#000">20</div>
<div class="a t" style="left:861.4px;top:305.46px;width:102px;height:15.2px;line-height:15.2px;text-align:center;font-size:9.65px;white-space:nowrap;color:#000">31</div>
<div class="a t" style="left:402.8px;top:320.61px;width:201.7px;height:15.2px;line-height:15.2px;font-size:9.65px;white-space:nowrap;overflow:hidden;color:#000">interior design company office</div>
<div class="a t" style="left:605px;top:320.61px;width:135px;height:15.2px;line-height:15.2px;text-align:center;font-size:9.65px;white-space:nowrap;color:#000">Commercial</div>
<div class="a t" style="left:740px;top:320.61px;width:121.4px;height:15.2px;line-height:15.2px;text-align:center;font-size:9.65px;white-space:nowrap;color:#000">0</div>
<div class="a t" style="left:861.4px;top:320.61px;width:102px;height:15.2px;line-height:15.2px;text-align:center;font-size:9.65px;white-space:nowrap;color:#000">26</div>
<div class="a t" style="left:402.8px;top:335.76px;width:201.7px;height:15.2px;line-height:15.2px;font-size:9.65px;white-space:nowrap;overflow:hidden;color:#000">interior design for office room in dhaka</div>
<div class="a t" style="left:605px;top:335.76px;width:135px;height:15.2px;line-height:15.2px;text-align:center;font-size:9.65px;white-space:nowrap;color:#000">Informational, Commercial</div>
<div class="a t" style="left:740px;top:335.76px;width:121.4px;height:15.2px;line-height:15.2px;text-align:center;font-size:9.65px;white-space:nowrap;color:#000">0</div>
<div class="a t" style="left:861.4px;top:335.76px;width:102px;height:15.2px;line-height:15.2px;text-align:center;font-size:9.65px;white-space:nowrap;color:#000">23</div>
<div class="a t" style="left:402.8px;top:350.91px;width:201.7px;height:15.2px;line-height:15.2px;font-size:9.65px;white-space:nowrap;overflow:hidden;color:#000">modern corporate office interior design</div>
<div class="a t" style="left:605px;top:350.91px;width:135px;height:15.2px;line-height:15.2px;text-align:center;font-size:9.65px;white-space:nowrap;color:#000">Commercial</div>
<div class="a t" style="left:740px;top:350.91px;width:121.4px;height:15.2px;line-height:15.2px;text-align:center;font-size:9.65px;white-space:nowrap;color:#000">0</div>
<div class="a t" style="left:861.4px;top:350.91px;width:102px;height:15.2px;line-height:15.2px;text-align:center;font-size:9.65px;white-space:nowrap;color:#000">30</div>
<div class="a t" style="left:402.8px;top:366.06px;width:201.7px;height:15.2px;line-height:15.2px;font-size:9.65px;white-space:nowrap;overflow:hidden;color:#000">best corporate office interior design</div>
<div class="a t" style="left:605px;top:366.06px;width:135px;height:15.2px;line-height:15.2px;text-align:center;font-size:9.65px;white-space:nowrap;color:#000">Informational, Transactional</div>
<div class="a t" style="left:740px;top:366.06px;width:121.4px;height:15.2px;line-height:15.2px;text-align:center;font-size:9.65px;white-space:nowrap;color:#000">20</div>
<div class="a t" style="left:861.4px;top:366.06px;width:102px;height:15.2px;line-height:15.2px;text-align:center;font-size:9.65px;white-space:nowrap;color:#000">22</div>
<div class="a t" style="left:402.8px;top:381.21px;width:201.7px;height:15.2px;line-height:15.2px;font-size:9.65px;white-space:nowrap;overflow:hidden;color:#000">corporate office interior design</div>
<div class="a t" style="left:605px;top:381.21px;width:135px;height:15.2px;line-height:15.2px;text-align:center;font-size:9.65px;white-space:nowrap;color:#000">Informational</div>
<div class="a t" style="left:740px;top:381.21px;width:121.4px;height:15.2px;line-height:15.2px;text-align:center;font-size:9.65px;white-space:nowrap;color:#000">20</div>
<div class="a t" style="left:861.4px;top:381.21px;width:102px;height:15.2px;line-height:15.2px;text-align:center;font-size:9.65px;white-space:nowrap;color:#000">31</div>
<div class="a t" style="left:402.8px;top:396.36px;width:201.7px;height:15.2px;line-height:15.2px;font-size:9.65px;white-space:nowrap;overflow:hidden;color:#000">modern corporate office interior design</div>
<div class="a t" style="left:605px;top:396.36px;width:135px;height:15.2px;line-height:15.2px;text-align:center;font-size:9.65px;white-space:nowrap;color:#000">Commercial</div>
<div class="a t" style="left:740px;top:396.36px;width:121.4px;height:15.2px;line-height:15.2px;text-align:center;font-size:9.65px;white-space:nowrap;color:#000">0</div>
<div class="a t" style="left:861.4px;top:396.36px;width:102px;height:15.2px;line-height:15.2px;text-align:center;font-size:9.65px;white-space:nowrap;color:#000">30</div>
<div class="a t" style="left:402.8px;top:411.51px;width:201.7px;height:15.2px;line-height:15.2px;font-size:9.65px;white-space:nowrap;overflow:hidden;color:#000">ceo office room interior design</div>
<div class="a t" style="left:605px;top:411.51px;width:135px;height:15.2px;line-height:15.2px;text-align:center;font-size:9.65px;white-space:nowrap;color:#000">Informational</div>
<div class="a t" style="left:740px;top:411.51px;width:121.4px;height:15.2px;line-height:15.2px;text-align:center;font-size:9.65px;white-space:nowrap;color:#000">10</div>
<div class="a t" style="left:861.4px;top:411.51px;width:102px;height:15.2px;line-height:15.2px;text-align:center;font-size:9.65px;white-space:nowrap;color:#000">10</div>
<div class="a t" style="left:402.8px;top:426.66px;width:201.7px;height:15.2px;line-height:15.2px;font-size:9.65px;white-space:nowrap;overflow:hidden;color:#000">office reception interior design</div>
<div class="a t" style="left:605px;top:426.66px;width:135px;height:15.2px;line-height:15.2px;text-align:center;font-size:9.65px;white-space:nowrap;color:#000">Informational</div>
<div class="a t" style="left:740px;top:426.66px;width:121.4px;height:15.2px;line-height:15.2px;text-align:center;font-size:9.65px;white-space:nowrap;color:#000">30</div>
<div class="a t" style="left:861.4px;top:426.66px;width:102px;height:15.2px;line-height:15.2px;text-align:center;font-size:9.65px;white-space:nowrap;color:#000">26</div>
<div class="a t" style="left:402.8px;top:441.81px;width:201.7px;height:15.2px;line-height:15.2px;font-size:9.65px;white-space:nowrap;overflow:hidden;color:#000">commercial space design</div>
<div class="a t" style="left:605px;top:441.81px;width:135px;height:15.2px;line-height:15.2px;text-align:center;font-size:9.65px;white-space:nowrap;color:#000">Informational, Transactional</div>
<div class="a t" style="left:740px;top:441.81px;width:121.4px;height:15.2px;line-height:15.2px;text-align:center;font-size:9.65px;white-space:nowrap;color:#000">20</div>
<div class="a t" style="left:861.4px;top:441.81px;width:102px;height:15.2px;line-height:15.2px;text-align:center;font-size:9.65px;white-space:nowrap;color:#000">23</div>
<div class="a t" style="left:402.8px;top:456.96px;width:201.7px;height:15.2px;line-height:15.2px;font-size:9.65px;white-space:nowrap;overflow:hidden;color:#000">industrial interior design</div>
<div class="a t" style="left:605px;top:456.96px;width:135px;height:15.2px;line-height:15.2px;text-align:center;font-size:9.65px;white-space:nowrap;color:#000">Informational</div>
<div class="a t" style="left:740px;top:456.96px;width:121.4px;height:15.2px;line-height:15.2px;text-align:center;font-size:9.65px;white-space:nowrap;color:#000">20</div>
<div class="a t" style="left:861.4px;top:456.96px;width:102px;height:15.2px;line-height:15.2px;text-align:center;font-size:9.65px;white-space:nowrap;color:#000">32</div>
<div class="a t" style="left:402.8px;top:472.11px;width:201.7px;height:15.2px;line-height:15.2px;font-size:9.65px;white-space:nowrap;overflow:hidden;color:#000">industrial style interior design</div>
<div class="a t" style="left:605px;top:472.11px;width:135px;height:15.2px;line-height:15.2px;text-align:center;font-size:9.65px;white-space:nowrap;color:#000">Informational</div>
<div class="a t" style="left:740px;top:472.11px;width:121.4px;height:15.2px;line-height:15.2px;text-align:center;font-size:9.65px;white-space:nowrap;color:#000">20</div>
<div class="a t" style="left:861.4px;top:472.11px;width:102px;height:15.2px;line-height:15.2px;text-align:center;font-size:9.65px;white-space:nowrap;color:#000">31</div>
<div class="a t" style="left:402.8px;top:487.26px;width:201.7px;height:15.2px;line-height:15.2px;font-size:9.65px;white-space:nowrap;overflow:hidden;color:#000">office boss cabin interior design</div>
<div class="a t" style="left:605px;top:487.26px;width:135px;height:15.2px;line-height:15.2px;text-align:center;font-size:9.65px;white-space:nowrap;color:#000">Informational</div>
<div class="a t" style="left:740px;top:487.26px;width:121.4px;height:15.2px;line-height:15.2px;text-align:center;font-size:9.65px;white-space:nowrap;color:#000">10</div>
<div class="a t" style="left:861.4px;top:487.26px;width:102px;height:15.2px;line-height:15.2px;text-align:center;font-size:9.65px;white-space:nowrap;color:#000">8</div>
<div class="a t" style="left:402.8px;top:502.41px;width:201.7px;height:15.2px;line-height:15.2px;font-size:9.65px;white-space:nowrap;overflow:hidden;color:#000">commercial office interior design</div>
<div class="a t" style="left:605px;top:502.41px;width:135px;height:15.2px;line-height:15.2px;text-align:center;font-size:9.65px;white-space:nowrap;color:#000">Informational, Transactional</div>
<div class="a t" style="left:740px;top:502.41px;width:121.4px;height:15.2px;line-height:15.2px;text-align:center;font-size:9.65px;white-space:nowrap;color:#000">10</div>
<div class="a t" style="left:861.4px;top:502.41px;width:102px;height:15.2px;line-height:15.2px;text-align:center;font-size:9.65px;white-space:nowrap;color:#000">27</div>
<div class="a t" style="left:402.8px;top:517.56px;width:201.7px;height:15.2px;line-height:15.2px;font-size:9.65px;white-space:nowrap;overflow:hidden;color:#000">garments office interior</div>
<div class="a t" style="left:605px;top:517.56px;width:135px;height:15.2px;line-height:15.2px;text-align:center;font-size:9.65px;white-space:nowrap;color:#000">Informational, Transactional</div>
<div class="a t" style="left:740px;top:517.56px;width:121.4px;height:15.2px;line-height:15.2px;text-align:center;font-size:9.65px;white-space:nowrap;color:#000">10</div>
<div class="a t" style="left:861.4px;top:517.56px;width:102px;height:15.2px;line-height:15.2px;text-align:center;font-size:9.65px;white-space:nowrap;color:#000">3</div>
<div class="a t" style="left:402.8px;top:532.71px;width:201.7px;height:15.2px;line-height:15.2px;font-size:9.65px;white-space:nowrap;overflow:hidden;color:#000">best corporate office interior design</div>
<div class="a t" style="left:605px;top:532.71px;width:135px;height:15.2px;line-height:15.2px;text-align:center;font-size:9.65px;white-space:nowrap;color:#000">Informational, Transactional</div>
<div class="a t" style="left:740px;top:532.71px;width:121.4px;height:15.2px;line-height:15.2px;text-align:center;font-size:9.65px;white-space:nowrap;color:#000">20</div>
<div class="a t" style="left:861.4px;top:532.71px;width:102px;height:15.2px;line-height:15.2px;text-align:center;font-size:9.65px;white-space:nowrap;color:#000">22</div>
<div class="a t" style="left:194.3px;top:548.53px;width:206px;height:16.7px;line-height:16.7px;text-align:center;font-size:11.6px;color:#000;white-space:nowrap;overflow:hidden">Services Name</div>
<div class="a t" style="left:400.3px;top:548.53px;width:204.7px;height:16.7px;line-height:16.7px;text-align:center;font-size:11.6px;color:#000;white-space:nowrap;overflow:hidden">Sub Keywords</div>
<div class="a t" style="left:605px;top:548.53px;width:135px;height:16.7px;line-height:16.7px;text-align:center;font-size:11.6px;color:#000;white-space:nowrap;overflow:hidden">Intent</div>
<div class="a t" style="left:740px;top:548.53px;width:121.4px;height:16.7px;line-height:16.7px;text-align:center;font-size:11.6px;color:#000;white-space:nowrap;overflow:hidden">Volume</div>
<div class="a t" style="left:861.4px;top:548.53px;width:102px;height:16.7px;line-height:16.7px;text-align:center;font-size:11.6px;color:#000;white-space:nowrap;overflow:hidden">Keyword Difficulty</div>
<div class="a t" style="left:402.8px;top:565.31px;width:201.7px;height:15.2px;line-height:15.2px;font-size:9.65px;white-space:nowrap;overflow:hidden;color:#000">restaurant interior design</div>
<div class="a t" style="left:605px;top:565.31px;width:135px;height:15.2px;line-height:15.2px;text-align:center;font-size:9.65px;white-space:nowrap;color:#000">Informational</div>
<div class="a t" style="left:740px;top:565.31px;width:121.4px;height:15.2px;line-height:15.2px;text-align:center;font-size:9.65px;white-space:nowrap;color:#000">260</div>
<div class="a t" style="left:861.4px;top:565.31px;width:102px;height:15.2px;line-height:15.2px;text-align:center;font-size:9.65px;white-space:nowrap;color:#000">32</div>
<div class="a t" style="left:402.8px;top:580.53px;width:201.7px;height:15.2px;line-height:15.2px;font-size:9.65px;white-space:nowrap;overflow:hidden;color:#000">small restaurant interior design</div>
<div class="a t" style="left:605px;top:580.53px;width:135px;height:15.2px;line-height:15.2px;text-align:center;font-size:9.65px;white-space:nowrap;color:#000">Informational</div>
<div class="a t" style="left:740px;top:580.53px;width:121.4px;height:15.2px;line-height:15.2px;text-align:center;font-size:9.65px;white-space:nowrap;color:#000">30</div>
<div class="a t" style="left:861.4px;top:580.53px;width:102px;height:15.2px;line-height:15.2px;text-align:center;font-size:9.65px;white-space:nowrap;color:#000">25</div>
<div class="a t" style="left:402.8px;top:595.75px;width:201.7px;height:15.2px;line-height:15.2px;font-size:9.65px;white-space:nowrap;overflow:hidden;color:#000">best restaurant interior design</div>
<div class="a t" style="left:605px;top:595.75px;width:135px;height:15.2px;line-height:15.2px;text-align:center;font-size:9.65px;white-space:nowrap;color:#000">Informational</div>
<div class="a t" style="left:740px;top:595.75px;width:121.4px;height:15.2px;line-height:15.2px;text-align:center;font-size:9.65px;white-space:nowrap;color:#000">20</div>
<div class="a t" style="left:861.4px;top:595.75px;width:102px;height:15.2px;line-height:15.2px;text-align:center;font-size:9.65px;white-space:nowrap;color:#000">21</div>
<div class="a t" style="left:402.8px;top:610.97px;width:201.7px;height:15.2px;line-height:15.2px;font-size:9.65px;white-space:nowrap;overflow:hidden;color:#000">restaurant interior design bangladesh</div>
<div class="a t" style="left:605px;top:610.97px;width:135px;height:15.2px;line-height:15.2px;text-align:center;font-size:9.65px;white-space:nowrap;color:#000">Informational, Transactional</div>
<div class="a t" style="left:740px;top:610.97px;width:121.4px;height:15.2px;line-height:15.2px;text-align:center;font-size:9.65px;white-space:nowrap;color:#000">20</div>
<div class="a t" style="left:861.4px;top:610.97px;width:102px;height:15.2px;line-height:15.2px;text-align:center;font-size:9.65px;white-space:nowrap;color:#000">5</div>
<div class="a t" style="left:402.8px;top:626.19px;width:201.7px;height:15.2px;line-height:15.2px;font-size:9.65px;white-space:nowrap;overflow:hidden;color:#000">best interior restaurant in dhaka</div>
<div class="a t" style="left:740px;top:626.19px;width:121.4px;height:15.2px;line-height:15.2px;text-align:center;font-size:9.65px;white-space:nowrap;color:#000">30</div>
<div class="a" style="left:0;top:122.46px;width:32.5px;height:15.2px;line-height:15.2px;text-align:center;font-size:8.2px;color:#444746;-webkit-text-stroke:0.1px #444746">93</div>
<div class="a" style="left:0;top:138.21px;width:32.5px;height:15.2px;line-height:15.2px;text-align:center;font-size:8.2px;color:#444746;-webkit-text-stroke:0.1px #444746">94</div>
<div class="a" style="left:0;top:153.36px;width:32.5px;height:15.2px;line-height:15.2px;text-align:center;font-size:8.2px;color:#444746;-webkit-text-stroke:0.1px #444746">95</div>
<div class="a" style="left:0;top:168.51px;width:32.5px;height:15.2px;line-height:15.2px;text-align:center;font-size:8.2px;color:#444746;-webkit-text-stroke:0.1px #444746">96</div>
<div class="a" style="left:0;top:183.66px;width:32.5px;height:15.2px;line-height:15.2px;text-align:center;font-size:8.2px;color:#444746;-webkit-text-stroke:0.1px #444746">97</div>
<div class="a" style="left:0;top:198.81px;width:32.5px;height:15.2px;line-height:15.2px;text-align:center;font-size:8.2px;color:#444746;-webkit-text-stroke:0.1px #444746">98</div>
<div class="a" style="left:0;top:213.96px;width:32.5px;height:15.2px;line-height:15.2px;text-align:center;font-size:8.2px;color:#444746;-webkit-text-stroke:0.1px #444746">99</div>
<div class="a" style="left:0;top:229.11px;width:32.5px;height:15.2px;line-height:15.2px;text-align:center;font-size:8.2px;color:#444746;-webkit-text-stroke:0.1px #444746">100</div>
<div class="a" style="left:0;top:244.26px;width:32.5px;height:15.2px;line-height:15.2px;text-align:center;font-size:8.2px;color:#444746;-webkit-text-stroke:0.1px #444746">101</div>
<div class="a" style="left:0;top:259.41px;width:32.5px;height:15.2px;line-height:15.2px;text-align:center;font-size:8.2px;color:#444746;-webkit-text-stroke:0.1px #444746">102</div>
<div class="a" style="left:0;top:274.56px;width:32.5px;height:15.2px;line-height:15.2px;text-align:center;font-size:8.2px;color:#444746;-webkit-text-stroke:0.1px #444746">103</div>
<div class="a" style="left:0;top:289.71px;width:32.5px;height:15.2px;line-height:15.2px;text-align:center;font-size:8.2px;color:#444746;-webkit-text-stroke:0.1px #444746">104</div>
<div class="a" style="left:0;top:304.86px;width:32.5px;height:15.2px;line-height:15.2px;text-align:center;font-size:8.2px;color:#444746;-webkit-text-stroke:0.1px #444746">105</div>
<div class="a" style="left:0;top:320.01px;width:32.5px;height:15.2px;line-height:15.2px;text-align:center;font-size:8.2px;color:#444746;-webkit-text-stroke:0.1px #444746">106</div>
<div class="a" style="left:0;top:335.16px;width:32.5px;height:15.2px;line-height:15.2px;text-align:center;font-size:8.2px;color:#444746;-webkit-text-stroke:0.1px #444746">107</div>
<div class="a" style="left:0;top:350.31px;width:32.5px;height:15.2px;line-height:15.2px;text-align:center;font-size:8.2px;color:#444746;-webkit-text-stroke:0.1px #444746">108</div>
<div class="a" style="left:0;top:365.46px;width:32.5px;height:15.2px;line-height:15.2px;text-align:center;font-size:8.2px;color:#444746;-webkit-text-stroke:0.1px #444746">109</div>
<div class="a" style="left:0;top:380.61px;width:32.5px;height:15.2px;line-height:15.2px;text-align:center;font-size:8.2px;color:#444746;-webkit-text-stroke:0.1px #444746">110</div>
<div class="a" style="left:0;top:395.76px;width:32.5px;height:15.2px;line-height:15.2px;text-align:center;font-size:8.2px;color:#444746;-webkit-text-stroke:0.1px #444746">111</div>
<div class="a" style="left:0;top:410.91px;width:32.5px;height:15.2px;line-height:15.2px;text-align:center;font-size:8.2px;color:#444746;-webkit-text-stroke:0.1px #444746">112</div>
<div class="a" style="left:0;top:426.06px;width:32.5px;height:15.2px;line-height:15.2px;text-align:center;font-size:8.2px;color:#444746;-webkit-text-stroke:0.1px #444746">113</div>
<div class="a" style="left:0;top:441.21px;width:32.5px;height:15.2px;line-height:15.2px;text-align:center;font-size:8.2px;color:#444746;-webkit-text-stroke:0.1px #444746">114</div>
<div class="a" style="left:0;top:456.36px;width:32.5px;height:15.2px;line-height:15.2px;text-align:center;font-size:8.2px;color:#444746;-webkit-text-stroke:0.1px #444746">115</div>
<div class="a" style="left:0;top:471.51px;width:32.5px;height:15.2px;line-height:15.2px;text-align:center;font-size:8.2px;color:#444746;-webkit-text-stroke:0.1px #444746">116</div>
<div class="a" style="left:0;top:486.66px;width:32.5px;height:15.2px;line-height:15.2px;text-align:center;font-size:8.2px;color:#444746;-webkit-text-stroke:0.1px #444746">117</div>
<div class="a" style="left:0;top:501.81px;width:32.5px;height:15.2px;line-height:15.2px;text-align:center;font-size:8.2px;color:#444746;-webkit-text-stroke:0.1px #444746">118</div>
<div class="a" style="left:0;top:516.96px;width:32.5px;height:15.2px;line-height:15.2px;text-align:center;font-size:8.2px;color:#444746;-webkit-text-stroke:0.1px #444746">119</div>
<div class="a" style="left:0;top:532.11px;width:32.5px;height:15.2px;line-height:15.2px;text-align:center;font-size:8.2px;color:#444746;-webkit-text-stroke:0.1px #444746">120</div>
<div class="a" style="left:0;top:548.56px;width:32.5px;height:15.2px;line-height:15.2px;text-align:center;font-size:8.2px;color:#444746;-webkit-text-stroke:0.1px #444746">121</div>
<div class="a" style="left:0;top:564.71px;width:32.5px;height:15.2px;line-height:15.2px;text-align:center;font-size:8.2px;color:#444746;-webkit-text-stroke:0.1px #444746">122</div>
<div class="a" style="left:0;top:579.93px;width:32.5px;height:15.2px;line-height:15.2px;text-align:center;font-size:8.2px;color:#444746;-webkit-text-stroke:0.1px #444746">123</div>
<div class="a" style="left:0;top:595.15px;width:32.5px;height:15.2px;line-height:15.2px;text-align:center;font-size:8.2px;color:#444746;-webkit-text-stroke:0.1px #444746">124</div>
<div class="a" style="left:0;top:610.37px;width:32.5px;height:15.2px;line-height:15.2px;text-align:center;font-size:8.2px;color:#444746;-webkit-text-stroke:0.1px #444746">125</div>
<div class="a" style="left:0;top:625.59px;width:32.5px;height:15.2px;line-height:15.2px;text-align:center;font-size:8.2px;color:#444746;-webkit-text-stroke:0.1px #444746">126</div>
<div class="a" style="left:0;top:640.81px;width:32.5px;height:15.2px;line-height:15.2px;text-align:center;font-size:8.2px;color:#444746;-webkit-text-stroke:0.1px #444746">127</div>
</div>
<div class="a" style="left:33px;top:116px;width:1042px;height:5px;overflow:hidden;background:#fff">
<div class="a" style="left:367.3px;top:-9.1px;width:204.7px;height:15px;line-height:15px;text-align:left;padding-left:2.5px;font-size:9.65px;white-space:nowrap;color:#000">vintage home interior</div>
<div class="a" style="left:572px;top:-9.1px;width:135px;height:15px;line-height:15px;text-align:center;font-size:9.65px;white-space:nowrap;color:#000">Informational</div>
<div class="a" style="left:707px;top:-9.1px;width:121.4px;height:15px;line-height:15px;text-align:center;font-size:9.65px;white-space:nowrap;color:#000">20</div>
<div class="a" style="left:828.4px;top:-9.1px;width:102px;height:15px;line-height:15px;text-align:center;font-size:9.65px;white-space:nowrap;color:#000">29</div>
<div class="a" style="left:161px;top:0;width:1px;height:5px;background:repeating-linear-gradient(to bottom,#333 0,#333 2px,transparent 2px,transparent 3.6px)"></div>
<div class="a" style="left:1111px;top:0;width:1px;height:5px;background:#e1e1e1"></div>
<div class="a" style="left:367px;top:0;width:1px;height:5px;background:#333"></div>
<div class="a" style="left:572px;top:0;width:1px;height:5px;background:#333"></div>
<div class="a" style="left:707px;top:0;width:1px;height:5px;background:#333"></div>
<div class="a" style="left:828px;top:0;width:1px;height:5px;background:#333"></div>
<div class="a" style="left:930px;top:0;width:1px;height:5px;background:repeating-linear-gradient(to bottom,#333 0,#333 2px,transparent 2px,transparent 3.6px)"></div>
</div>
<div class="a" style="left:0;top:121px;width:1075px;height:1px;background:#e1e1e1"></div>
<div class="a" style="left:194px;top:121px;width:770px;height:1px;background:#333"></div>
<div class="a" style="left:0;top:98px;width:1075px;height:1px;background:#e1e1e1"></div>
<div class="a" style="left:0;top:99px;width:1075px;height:17px;background:#fff"></div>
<div class="a" style="left:401px;top:99px;width:204px;height:17px;background:#d3e3fd"></div>
<div class="a" style="left:32.5px;top:99px;width:161.8px;height:17px;line-height:17px;text-align:center;font-size:8.3px;color:#444746;font-weight:normal;-webkit-text-stroke:0.15px #444746">A</div>
<div class="a" style="left:194px;top:99px;width:1px;height:17px;background:#e1e1e1"></div>
<div class="a" style="left:194.3px;top:99px;width:206px;height:17px;line-height:17px;text-align:center;font-size:8.3px;color:#444746;font-weight:normal;-webkit-text-stroke:0.15px #444746">B</div>
<div class="a" style="left:400px;top:99px;width:1px;height:17px;background:#e1e1e1"></div>
<div class="a" style="left:400.3px;top:99px;width:204.7px;height:17px;line-height:17px;text-align:center;font-size:8.3px;color:#0b2e6b;font-weight:bold;-webkit-text-stroke:0.15px #0b2e6b">C</div>
<div class="a" style="left:605px;top:99px;width:1px;height:17px;background:#e1e1e1"></div>
<div class="a" style="left:605px;top:99px;width:135px;height:17px;line-height:17px;text-align:center;font-size:8.3px;color:#444746;font-weight:normal;-webkit-text-stroke:0.15px #444746">D</div>
<div class="a" style="left:740px;top:99px;width:1px;height:17px;background:#e1e1e1"></div>
<div class="a" style="left:740px;top:99px;width:121.4px;height:17px;line-height:17px;text-align:center;font-size:8.3px;color:#444746;font-weight:normal;-webkit-text-stroke:0.15px #444746">E</div>
<div class="a" style="left:861px;top:99px;width:1px;height:17px;background:#e1e1e1"></div>
<div class="a" style="left:861.4px;top:99px;width:102px;height:17px;line-height:17px;text-align:center;font-size:8.3px;color:#444746;font-weight:normal;-webkit-text-stroke:0.15px #444746">F</div>
<div class="a" style="left:963px;top:99px;width:1px;height:17px;background:#e1e1e1"></div>
<div class="a" style="left:963.4px;top:99px;width:180.6px;height:17px;line-height:17px;text-align:center;font-size:8.3px;color:#444746;font-weight:normal;-webkit-text-stroke:0.15px #444746">G</div>
<div class="a" style="left:1144px;top:99px;width:1px;height:17px;background:#e1e1e1"></div>
<div class="a" style="left:0;top:116px;width:1075px;height:1px;background:#c7c7c7"></div>
<div class="a" style="left:0;top:99px;width:30px;height:14px;background:#f8f9fa"></div>
<div class="a" style="left:30px;top:99px;width:3px;height:17px;background:#c7c7c7"></div>
<div class="a" style="left:0;top:113px;width:33px;height:3px;background:#c7c7c7"></div>
<div class="a" style="left:0;top:642px;width:1075px;height:10px;background:#fff"></div>
<div class="a" style="left:0;top:642px;width:32px;height:10px;background:#f8f9fa"></div>
<div class="a" style="left:0;top:642px;width:1075px;height:1px;background:#e1e1e1"></div>
<div class="a" style="left:32px;top:642px;width:1px;height:10px;background:#e1e1e1"></div>
<div class="a" style="left:35px;top:644.8px;width:620px;height:5.8px;border-radius:3px;background:#dadada"></div>
<div class="a" style="left:0;top:652px;width:1075px;height:1px;background:#dadce0"></div>
<!-- tabs bar -->
<div class="a" style="left:0;top:653px;width:1075px;height:19px;background:#f9fbfd"></div>
<svg class="a" style="left:41px;top:663px" width="7.2" height="7.2" viewBox="0 0 7.2 7.2"><path d="M0 3.6H7.2M3.6 0V7.2" stroke="#444746" stroke-width="1.2"/></svg>
<div class="a" style="left:68.5px;top:663.2px;width:10.5px;height:1.2px;background:#444746"></div>
<div class="a" style="left:68.5px;top:666.2px;width:10.5px;height:1.2px;background:#444746"></div>
<div class="a" style="left:68.5px;top:669.2px;width:10.5px;height:1.2px;background:#444746"></div>
<div class="a tab" style="left:106px;font-size:10.7px;letter-spacing:0.3px">Compititor Analysis</div>
<svg class="a" style="left:211px;top:664.8px" width="5.6" height="3" viewBox="0 0 6 3.2"><path d="M0 0H6L3 3.2z" fill="#444746"/></svg>
<div class="a" style="left:226px;top:652.5px;width:84px;height:20px;background:#e1e9f7"></div>
<div class="a tab" style="left:235px;font-size:10.8px;color:#0b57d0;-webkit-text-stroke:0.35px #0b57d0;letter-spacing:0.3px">Keywords</div>
<svg class="a" style="left:296px;top:664.8px" width="5.6" height="3" viewBox="0 0 6 3.2"><path d="M0 0H6L3 3.2z" fill="#0b57d0"/></svg>
<div class="a tab" style="left:320px;font-size:10.7px;letter-spacing:0.1px">Residence Design</div>
<svg class="a" style="left:417px;top:664.8px" width="5.6" height="3" viewBox="0 0 6 3.2"><path d="M0 0H6L3 3.2z" fill="#444746"/></svg>
<div class="a tab" style="left:440px;font-size:10.65px">Sheet7</div>
<svg class="a" style="left:483.5px;top:664.8px" width="5.6" height="3" viewBox="0 0 6 3.2"><path d="M0 0H6L3 3.2z" fill="#444746"/></svg>
<div class="a tab" style="left:507.5px;font-size:10.7px;letter-spacing:0.33px">Technical Audit</div>
<svg class="a" style="left:592.5px;top:664.8px" width="5.6" height="3" viewBox="0 0 6 3.2"><path d="M0 0H6L3 3.2z" fill="#444746"/></svg>

<!-- analyze pill -->
<div class="a" style="left:964.7px;top:623px;width:140px;height:22.6px;border-radius:11.3px;background:#fff;box-shadow:0 1px 3px rgba(0,0,0,0.22),0 0 1px rgba(0,0,0,0.15)"></div>
<svg class="a" style="left:971px;top:629px" width="10.6" height="10.6" viewBox="0 0 24 24"><path d="M12 0Q13.5 10.5 24 12 13.5 13.5 12 24 10.5 13.5 0 12 10.5 10.5 12 0z" fill="#444746"/></svg>
<div class="a" style="left:989px;top:627.5px;font-size:9.1px;line-height:13px;color:#3c4043;white-space:nowrap">Analyze this data</div>
<div class="a" style="left:1070.8px;top:629.5px;width:2px;height:2px;border-radius:1px;background:#444746"></div>
<div class="a" style="left:1070.8px;top:633.3px;width:2px;height:2px;border-radius:1px;background:#444746"></div>
<div class="a" style="left:1070.8px;top:637.1px;width:2px;height:2px;border-radius:1px;background:#444746"></div>

</body></html>
